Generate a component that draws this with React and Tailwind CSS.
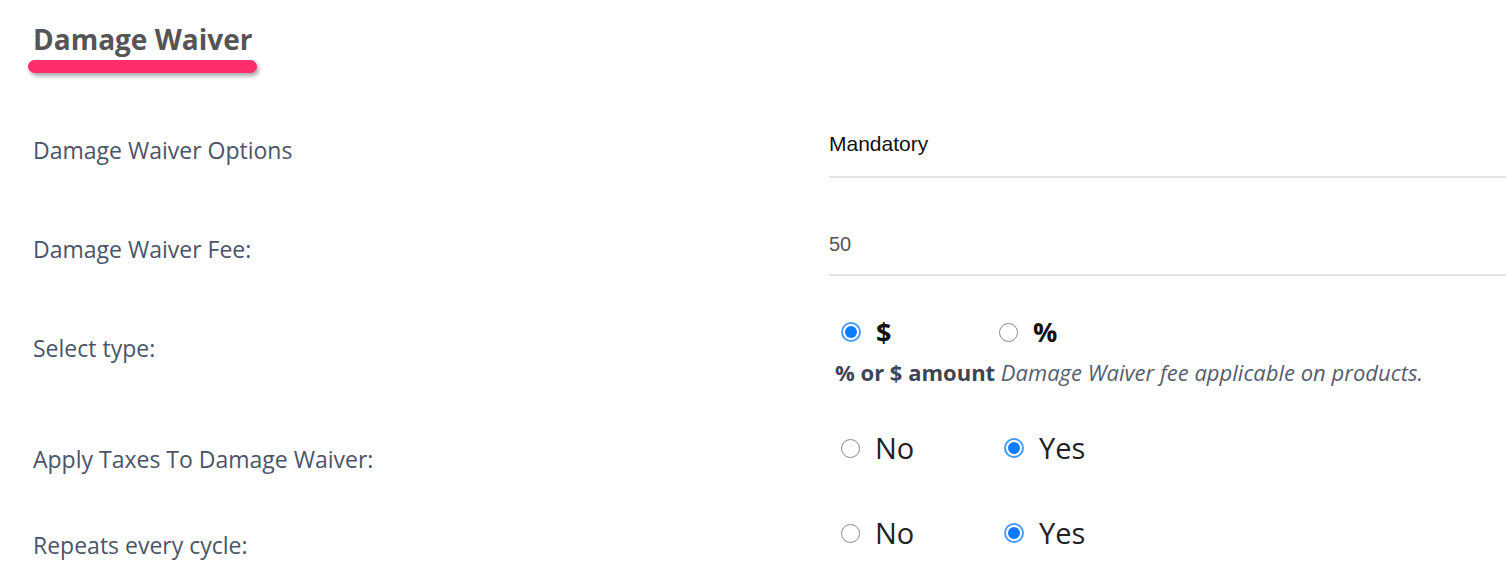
import { useState } from 'react';

const labelFont = { fontFamily: '"Open Sans", "Noto Sans", sans-serif' };
const inputFont = { fontFamily: '"Liberation Sans", Arial, sans-serif' };

function Radio({ checked }) {
  if (checked) {
    return (
      <span className="flex h-[20px] w-[20px] shrink-0 items-center justify-center rounded-full border-2 border-[#4a9bff] bg-white">
        <span className="h-[12px] w-[12px] rounded-full bg-[#0a7cff]" />
      </span>
    );
  }
  return <span className="h-[19px] w-[19px] shrink-0 rounded-full border border-[#8a8a8a] bg-white" />;
}

function RadioGroup({ options, value, onChange, width, textClass }) {
  return (
    <div className="flex items-center">
      {options.map((opt) => (
        <button
          key={opt}
          type="button"
          onClick={() => onChange(opt)}
          className={`flex items-center gap-[15px] ${width}`}
        >
          <Radio checked={value === opt} />
          <span className={textClass} style={labelFont}>{opt}</span>
        </button>
      ))}
    </div>
  );
}

function Label({ children, pt }) {
  return (
    <div className={`w-[796px] shrink-0 text-[23px] leading-[32px] text-[#4a5568] ${pt}`} style={labelFont}>
      {children}
    </div>
  );
}

export default function App() {
  const [feeType, setFeeType] = useState('$');
  const [applyTaxes, setApplyTaxes] = useState('Yes');
  const [repeats, setRepeats] = useState('Yes');

  return (
    <div className="min-h-[586px] w-[1506px] overflow-hidden bg-white pl-[33px]">
      {/* Section heading */}
      <div className="pt-[20px]">
        <h2 className="text-[28px] font-bold leading-[38px] text-[#555555]" style={labelFont}>
          Damage Waiver
        </h2>
        <div className="ml-[-5px] mt-[2px] h-[13px] w-[229px] rounded-full bg-[#fe2e6c] shadow-[2px_3px_4px_rgba(0,0,0,0.35)]" />
      </div>

      {/* Options select */}
      <div className="mt-[45px] flex h-[60px]">
        <Label pt="pt-[16px]">Damage Waiver Options</Label>
        <div className="flex-1 border-b-2 border-[#e2e2e2] pt-[12px]">
          <div className="text-[21px] leading-[28px] text-[#111]" style={inputFont}>Mandatory</div>
        </div>
      </div>

      {/* Fee input */}
      <div className="flex h-[98px]">
        <Label pt="pt-[55px]">Damage Waiver Fee:</Label>
        <div className="flex-1 border-b-2 border-[#e2e2e2] pt-[54px]">
          <div className="text-[20px] leading-[24px] text-[#555]" style={inputFont}>50</div>
        </div>
      </div>

      {/* Fee type */}
      <div className="flex h-[124px]">
        <Label pt="pt-[56px]">Select type:</Label>
        <div className="flex-1 pt-[38px]">
          <div className="ml-[12px] h-[36px]">
            <RadioGroup
              options={['$', '%']}
              value={feeType}
              onChange={setFeeType}
              width="w-[158px]"
              textClass="text-[27px] font-bold leading-[36px] text-[#111]"
            />
          </div>
          <p className="ml-[6px] mt-[8px] text-[22px] leading-[28px] text-[#555e6e]" style={labelFont}>
            <span className="font-bold text-[#3d4556]">% or $ amount</span>{' '}
            <em>Damage Waiver fee applicable on products.</em>
          </p>
        </div>
      </div>

      {/* Taxes */}
      <div className="flex h-[86px]">
        <Label pt="pt-[43px]">Apply Taxes To Damage Waiver:</Label>
        <div className="flex-1 pt-[29px]">
          <div className="ml-[12px]">
            <RadioGroup
              options={['No', 'Yes']}
              value={applyTaxes}
              onChange={setApplyTaxes}
              width="w-[163px]"
              textClass="text-[29px] leading-[38px] text-[#222]"
            />
          </div>
        </div>
      </div>

      {/* Repeats */}
      <div className="flex h-[100px]">
        <Label pt="pt-[43px]">Repeats every cycle:</Label>
        <div className="flex-1 pt-[28px]">
          <div className="ml-[12px]">
            <RadioGroup
              options={['No', 'Yes']}
              value={repeats}
              onChange={setRepeats}
              width="w-[163px]"
              textClass="text-[29px] leading-[38px] text-[#222]"
            />
          </div>
        </div>
      </div>
    </div>
  );
}
